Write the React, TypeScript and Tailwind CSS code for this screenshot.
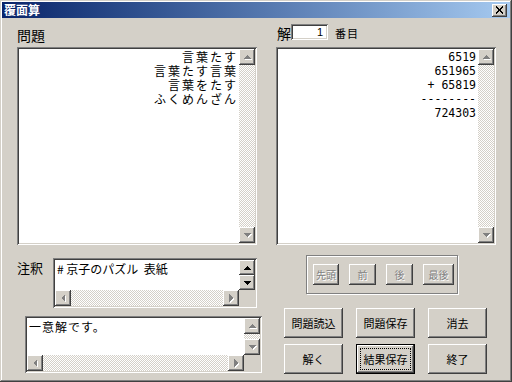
import type { ReactNode } from "react";

const raised =
  "shadow-[inset_-1px_-1px_0_#404040,inset_1px_1px_0_#ffffff,inset_-2px_-2px_0_#808080,inset_2px_2px_0_#d4d0c8]";
const sunken =
  "p-[2px] shadow-[inset_1px_1px_0_#808080,inset_-1px_-1px_0_#ffffff,inset_2px_2px_0_#404040,inset_-2px_-2px_0_#d4d0c8]";
const checker =
  "bg-[image:repeating-conic-gradient(#d4d0c8_0_25%,#ffffff_0_50%)] bg-[length:2px_2px]";
const jp = "font-['Noto_Sans_CJK_JP',sans-serif]";

type Dir = "up" | "down" | "left" | "right";

const arrowPts: Record<Dir, string> = {
  up: "4,10 8,6 12,10",
  down: "4,6 12,6 8,10",
  left: "10,4 10,12 6,8",
  right: "6,4 6,12 10,8",
};

function ScrollBtn({ dir, disabled = true, h = 16 }: { dir: Dir; disabled?: boolean; h?: number }) {
  return (
    <div className={`w-[16px] shrink-0 bg-[#d4d0c8] ${raised} flex items-center justify-center`} style={{ height: h }}>
      <svg width="16" height="16" viewBox="0 0 16 16" shapeRendering="crispEdges">
        {disabled && <polygon points={arrowPts[dir]} fill="#ffffff" transform="translate(1 1)" />}
        <polygon points={arrowPts[dir]} fill={disabled ? "#808080" : "#000000"} />
      </svg>
    </div>
  );
}

function VScroll() {
  return (
    <div className="w-[16px] flex flex-col">
      <ScrollBtn dir="up" />
      <div className={`flex-1 ${checker}`} />
      <ScrollBtn dir="down" />
    </div>
  );
}

function HScroll() {
  return (
    <div className="h-[16px] flex">
      <ScrollBtn dir="left" />
      <div className={`flex-1 ${checker}`} />
      <ScrollBtn dir="right" />
    </div>
  );
}

function BigBox({ children, className = "" }: { children: ReactNode; className?: string }) {
  return (
    <div className={`w-full h-[198px] bg-white ${sunken}`}>
      <div className="flex h-full">
        <div className={`flex-1 bg-white ${className}`}>{children}</div>
        <VScroll />
      </div>
    </div>
  );
}

function NavBtn({ label, w }: { label: string; w: string }) {
  return (
    <div
      className={`${w} h-[21px] bg-[#d4d0c8] ${raised} flex items-center justify-center text-[10px] text-[#808080] [text-shadow:1px_1px_0_#ffffff]`}
    >
      {label}
    </div>
  );
}

function Btn({ label, focused = false }: { label: string; focused?: boolean }) {
  if (focused) {
    return (
      <div className="h-[30px] border border-black bg-[#d4d0c8] flex">
        <div className={`flex-1 flex p-[3px] ${raised}`}>
          <div className="flex-1 border border-dotted border-black flex items-center justify-center text-[11px] text-black">
            {label}
          </div>
        </div>
      </div>
    );
  }
  return (
    <div className={`h-[30px] bg-[#d4d0c8] ${raised} flex items-center justify-center text-[11px] text-black`}>
      {label}
    </div>
  );
}

export default function App() {
  const problem = ["言葉たす", "言葉たす言葉", "言葉をたす", "ふくめんざん"];
  const answer = ["6519", "651965", "+ 65819", "--------", "724303"];

  return (
    <div
      className={`w-[512px] h-[382px] bg-[#d4d0c8] p-[2px] flex flex-col ${jp} shadow-[inset_-1px_-1px_0_#404040,inset_1px_1px_0_#d4d0c8,inset_-2px_-2px_0_#808080,inset_2px_2px_0_#ffffff]`}
    >
      {/* title bar */}
      <div className="h-[16px] flex items-center justify-between bg-gradient-to-r from-[#0a246a] to-[#a6caf0] pl-[2px] pr-[3px]">
        <span className="text-[12px] leading-[16px] font-bold text-white">覆面算</span>
        <div className={`w-[15px] h-[13px] bg-[#d4d0c8] ${raised} flex items-center justify-center`}>
          <svg width="9" height="8" viewBox="0 0 9 8" shapeRendering="crispEdges">
            <path d="M1 0.5 L8 7.5 M8 0.5 L1 7.5" stroke="#000" strokeWidth="1.8" />
          </svg>
        </div>
      </div>

      <div className="flex pl-[15px] pt-[4px]">
        {/* left column */}
        <div className="w-[245px] flex flex-col">
          <div className="h-[25px] flex items-center text-[14px] leading-none text-black">問題</div>
          <div className="w-[240px]">
            <BigBox className="pt-[1px] pr-[1px] text-right text-[12px] leading-[14px] tracking-[2px] text-black">
              {problem.map((l) => (
                <div key={l}>{l}</div>
              ))}
            </BigBox>
          </div>

          <div className="mt-[13px] flex">
            <div className="w-[36px] pt-[2px] text-[13px] leading-[16px] text-black">注釈</div>
            <div className={`w-[204px] h-[50px] bg-white ${sunken}`}>
              <div className="grid grid-cols-[1fr_16px] grid-rows-[1fr_16px] h-full">
                <div className="bg-white px-[2px] pt-[2px] text-[12px] leading-[14px] text-black whitespace-pre">
                  {"# 京子のパズル  表紙"}
                </div>
                <div className="flex flex-col">
                  <ScrollBtn dir="up" disabled={false} h={15} />
                  <ScrollBtn dir="down" disabled={false} h={15} />
                </div>
                <HScroll />
                <div className="bg-[#d4d0c8]" />
              </div>
            </div>
          </div>

          <div className={`mt-[8px] ml-[8px] w-[237px] h-[57px] bg-white ${sunken}`}>
            <div className="grid grid-cols-[1fr_16px] grid-rows-[1fr_16px] h-full">
              <div className="bg-white px-[2px] pt-[2px] text-[12px] leading-[14px] tracking-[1px] text-black">
                一意解です。
              </div>
              <VScroll />
              <HScroll />
              <div className="bg-[#d4d0c8]" />
            </div>
          </div>
        </div>

        {/* right column */}
        <div className="ml-[14px] w-[220px] flex flex-col">
          <div className="h-[25px] flex items-start pl-[1px] pt-[2px]">
            <span className="text-[14px] leading-[18px] text-black">解</span>
            <div className={`w-[37px] h-[16px] bg-white ${sunken} flex items-center justify-end pr-[5px] text-[11px] leading-none font-['Liberation_Sans',sans-serif] text-black`}>
              1
            </div>
            <span className="ml-[7px] text-[11px] leading-[18px] tracking-[1px] text-black">番目</span>
          </div>
          <BigBox className="pt-[1px] pr-[2px] text-right font-['DejaVu_Sans_Mono',monospace] text-[11.5px] leading-[14px] text-black whitespace-pre">
            {answer.map((l, i) => (
              <div key={i}>{l}</div>
            ))}
          </BigBox>

          <div className="mt-[10px] ml-[30px] w-[152px] h-[39px] border border-[#808080] shadow-[inset_1px_1px_0_#ffffff,1px_1px_0_#ffffff] flex items-center gap-[10px] pl-[6px]">
            <NavBtn label="先頭" w="w-[26px]" />
            <NavBtn label="前" w="w-[27px]" />
            <NavBtn label="後" w="w-[27px]" />
            <NavBtn label="最後" w="w-[31px]" />
          </div>

          <div className="mt-[14px] ml-[8px] w-[203px] grid grid-cols-3 gap-x-[13px] gap-y-[6px]">
            <Btn label="問題読込" />
            <Btn label="問題保存" />
            <Btn label="消去" />
            <Btn label="解く" />
            <Btn label="結果保存" focused />
            <Btn label="終了" />
          </div>
        </div>
      </div>
    </div>
  );
}
